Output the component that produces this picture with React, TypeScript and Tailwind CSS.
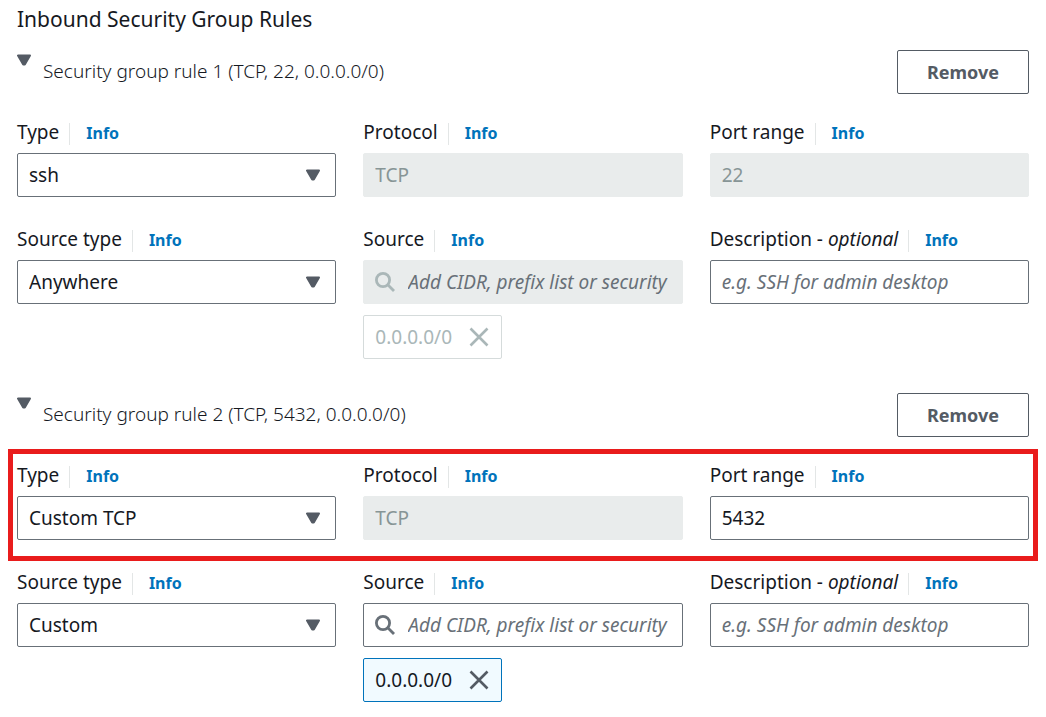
import { useId, useState, type ReactNode } from "react";

const control =
  "block h-11 w-full rounded-[2px] border border-[#687078] bg-white px-[11px] text-[19px] text-[#16191f] placeholder:italic placeholder:text-[#687078] disabled:border-[#e9ecec] disabled:bg-[#e9ecec] disabled:text-[#879596] disabled:opacity-100";

function Caret() {
  return (
    <svg width="14" height="12" viewBox="0 0 14 12" fill="#545b64" stroke="#545b64" strokeWidth="2" strokeLinejoin="round" aria-hidden="true">
      <path d="M1 1.5h12L7.8 10.4H6.2z" />
    </svg>
  );
}

function SearchIcon({ disabled }: { disabled?: boolean }) {
  return (
    <svg width="20" height="20" viewBox="0 0 20 20" fill="none" stroke={disabled ? "#aab7b8" : "#687078"} strokeWidth="2.8" aria-hidden="true">
      <circle cx="8" cy="8" r="6.6" />
      <path d="M12.8 12.8l6.2 6.2" />
    </svg>
  );
}

type FieldProps = {
  label: ReactNode;
  children: (id: string) => ReactNode;
};

function Field({ label, children }: FieldProps) {
  const id = useId();
  return (
    <div className="min-w-0">
      <div className="mb-2 flex h-[22px] items-start">
        <label htmlFor={id} className="text-[19px] leading-[18px] whitespace-nowrap">
          {label}
        </label>
        <span className="ml-[10px] flex h-[22px] items-start border-l border-[#e3e6e6] pl-4">
          <a href="#info" className="text-base leading-5 font-bold text-[#0073bb]">
            Info
          </a>
        </span>
      </div>
      {children(id)}
    </div>
  );
}

function SelectField({ label, value, options }: { label: string; value: string; options: string[] }) {
  return (
    <Field label={label}>
      {(id) => (
        <div className="relative">
          <select id={id} defaultValue={value} className={`${control} appearance-none`}>
            {options.map((option) => (
              <option key={option}>{option}</option>
            ))}
          </select>
          <span className="pointer-events-none absolute inset-y-0 right-4 flex items-center">
            <Caret />
          </span>
        </div>
      )}
    </Field>
  );
}

function InputField({ label, value, placeholder, disabled }: { label: ReactNode; value?: string; placeholder?: string; disabled?: boolean }) {
  return (
    <Field label={label}>
      {(id) => <input id={id} type="text" defaultValue={value} placeholder={placeholder} disabled={disabled} className={control} />}
    </Field>
  );
}

function SourceField({ cidr, disabled }: { cidr: string; disabled?: boolean }) {
  return (
    <Field label="Source">
      {(id) => (
        <>
          <div className="relative">
            <input
              id={id}
              type="text"
              placeholder="Add CIDR, prefix list or security"
              disabled={disabled}
              className={`${control} pl-11`}
            />
            <span className="pointer-events-none absolute inset-y-0 left-3 flex items-center">
              <SearchIcon disabled={disabled} />
            </span>
          </div>
          <div
            className={`mt-[11px] flex h-11 w-fit items-center gap-4 rounded-[2px] border px-[11px] text-[19px] ${
              disabled ? "border-[#d5dbdb] bg-white text-[#aab7b8]" : "border-[#0073bb] bg-[#f1faff] text-[#16191f]"
            }`}
          >
            {cidr}
            <button type="button" aria-label={`Remove ${cidr}`} disabled={disabled}>
              <svg width="22" height="20" viewBox="0 0 22 20" fill="none" stroke={disabled ? "#aab7b8" : "#545b64"} strokeWidth="2.6" aria-hidden="true">
                <path d="M2.5 1.5l17 17M19.5 1.5l-17 17" />
              </svg>
            </button>
          </div>
        </>
      )}
    </Field>
  );
}

type Rule = {
  title: string;
  type: string;
  port: string;
  portLocked: boolean;
  sourceType: string;
  cidr: string;
  highlighted: boolean;
};

const rules: Rule[] = [
  {
    title: "Security group rule 1 (TCP, 22, 0.0.0.0/0)",
    type: "ssh",
    port: "22",
    portLocked: true,
    sourceType: "Anywhere",
    cidr: "0.0.0.0/0",
    highlighted: false,
  },
  {
    title: "Security group rule 2 (TCP, 5432, 0.0.0.0/0)",
    type: "Custom TCP",
    port: "5432",
    portLocked: false,
    sourceType: "Custom",
    cidr: "0.0.0.0/0",
    highlighted: true,
  },
];

function RuleSection({ rule }: { rule: Rule }) {
  const [open, setOpen] = useState(true);
  return (
    <section>
      <div className="flex h-11 items-start justify-between">
        <h3 className="pt-1">
          <button type="button" aria-expanded={open} onClick={() => setOpen(!open)} className="flex items-start gap-3 text-left">
            <Caret />
            <span className="pt-1 text-[19px] leading-[26px] font-light">{rule.title}</span>
          </button>
        </h3>
        <button type="button" className="h-11 rounded-[2px] border border-[#545b64] bg-white px-[29px] text-lg font-bold text-[#545b64]">
          Remove
        </button>
      </div>
      {open && (
        <div className="mt-[29px] flex flex-col gap-[33px]">
          <div className="relative grid grid-cols-3 gap-x-[27px]">
            <SelectField label="Type" value={rule.type} options={["ssh", "Custom TCP"]} />
            <InputField label="Protocol" value="TCP" disabled />
            <InputField label="Port range" value={rule.port} disabled={rule.portLocked} />
            {rule.highlighted && (
              <div className="pointer-events-none absolute -inset-x-[9px] -top-[17px] -bottom-[21px] border-5 border-[#e91c1c]" />
            )}
          </div>
          <div className="grid grid-cols-3 gap-x-[27px]">
            <SelectField label="Source type" value={rule.sourceType} options={["Anywhere", "Custom"]} />
            <SourceField cidr={rule.cidr} disabled={rule.portLocked} />
            <InputField
              label={
                <>
                  Description - <em>optional</em>
                </>
              }
              placeholder="e.g. SSH for admin desktop"
            />
          </div>
        </div>
      )}
    </section>
  );
}

export default function App() {
  return (
    <main className="min-h-screen bg-white px-[17px] pt-1 pb-[15px] font-['Noto_Sans','Open_Sans',sans-serif] text-[#16191f]">
      <h2 className="mb-4 text-[21px] leading-[30px]">Inbound Security Group Rules</h2>
      <div className="flex flex-col gap-[34px]">
        {rules.map((rule) => (
          <RuleSection key={rule.title} rule={rule} />
        ))}
      </div>
    </main>
  );
}
